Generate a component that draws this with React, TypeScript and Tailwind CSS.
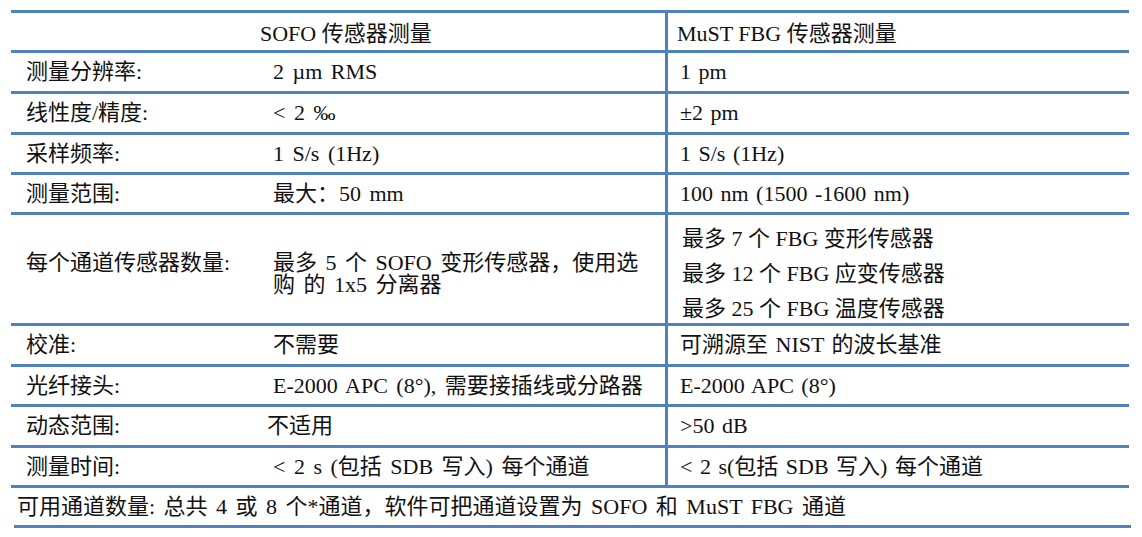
import React from "react"

type Row = {
  label: string
  sofo: React.ReactNode
  fbg: React.ReactNode
  h: string
}

const rows: Row[] = [
  { label: "测量分辨率:", sofo: "2 µm RMS", fbg: "1 pm", h: "h-[41px]" },
  { label: "线性度/精度:", sofo: "< 2 ‰", fbg: "±2 pm", h: "h-[41px]" },
  { label: "采样频率:", sofo: "1 S/s (1Hz)", fbg: "1 S/s (1Hz)", h: "h-[40px]" },
  { label: "测量范围:", sofo: "最大：50 mm", fbg: "100 nm (1500 -1600 nm)", h: "h-[40px]" },
]

const rowsAfter: Row[] = [
  { label: "校准:", sofo: "不需要", fbg: "可溯源至 NIST 的波长基准", h: "h-[41px]" },
  { label: "光纤接头:", sofo: "E-2000 APC (8°), 需要接插线或分路器", fbg: "E-2000 APC (8°)", h: "h-[40px]" },
  { label: "动态范围:", sofo: <span className="-ml-[6px]">不适用</span>, fbg: ">50 dB", h: "h-[41px]" },
  { label: "测量时间:", sofo: "< 2 s (包括 SDB 写入) 每个通道", fbg: "< 2 s(包括 SDB 写入) 每个通道", h: "h-[40px]" },
]

function SimpleRow({ row }: { row: Row }) {
  return (
    <div className={`flex border-t-[3px] border-[#4f81bd] ${row.h}`}>
      <div className="flex w-[654px] items-center">
        <div className="w-[262px] pl-[15px]">{row.label}</div>
        <div className="whitespace-nowrap [word-spacing:3px]">{row.sofo}</div>
      </div>
      <div className="flex flex-1 items-center whitespace-nowrap border-l-[3px] border-[#4f81bd] pl-[12px] [word-spacing:2px]">
        {row.fbg}
      </div>
    </div>
  )
}

export default function App() {
  return (
    <div className="min-h-[537px] bg-white pl-[11px] pt-[10px] text-[22px] leading-none text-[#111] font-['Liberation_Serif','Noto_Sans_CJK_SC',serif]">
      <div className="w-[1118px]">
        {/* header */}
        <div className="flex h-[40px] border-t-[3px] border-[#4f81bd]">
          <div className="flex w-[654px] items-center pl-[249px] pt-[4px]">SOFO 传感器测量</div>
          <div className="flex flex-1 items-center border-l-[3px] border-[#4f81bd] pl-[9px] pt-[4px]">
            MuST FBG 传感器测量
          </div>
        </div>

        {rows.map((r) => (
          <SimpleRow key={r.label} row={r} />
        ))}

        {/* sensors per channel */}
        <div className="flex h-[111px] border-t-[3px] border-[#4f81bd]">
          <div className="flex w-[654px] pt-[37px]">
            <div className="w-[262px] pl-[15px]">每个通道传感器数量:</div>
            <div className="leading-[22px] [word-spacing:3px]">
              最多 5 个 SOFO 变形传感器，使用选
              <br />
              购 的 1x5 分离器
            </div>
          </div>
          <div className="flex flex-1 flex-col border-l-[3px] border-[#4f81bd] pl-[14px] pt-[6px] leading-[35px]">
            <div>最多 7 个 FBG 变形传感器</div>
            <div>最多 12 个 FBG 应变传感器</div>
            <div>最多 25 个 FBG 温度传感器</div>
          </div>
        </div>

        {rowsAfter.map((r) => (
          <SimpleRow key={r.label} row={r} />
        ))}

        {/* footer */}
        <div className="flex h-[40px] items-center border-t-[3px] border-[#4f81bd] pl-[6px] [word-spacing:3px]">
          可用通道数量: 总共 4 或 8 个*通道，软件可把通道设置为 SOFO 和 MuST FBG 通道
        </div>
        <div className="ml-[3px] h-[3px] w-[1117px] bg-[#4f81bd]" />
      </div>
    </div>
  )
}
